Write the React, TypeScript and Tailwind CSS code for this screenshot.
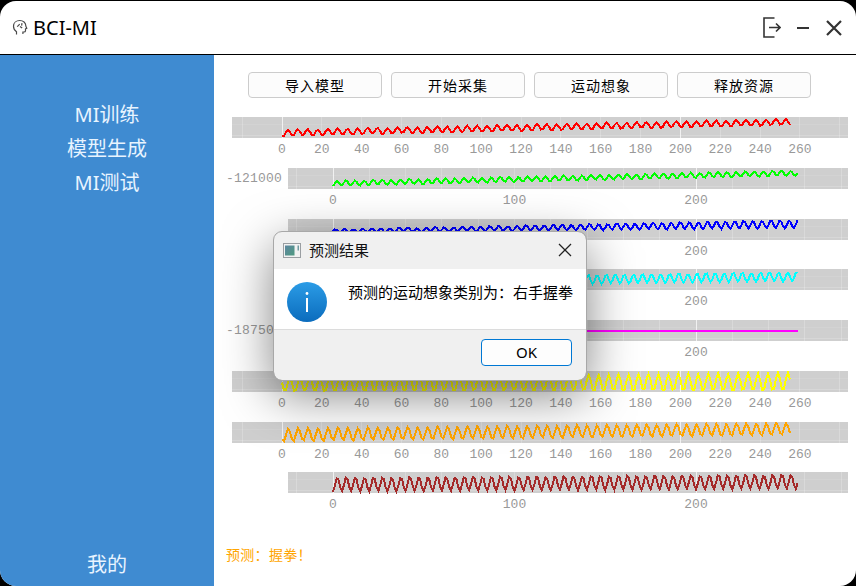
const cjk = "font-['Noto_Sans','Noto_Sans_CJK_SC',sans-serif]";

type Plot = {
  color: string;
  scale: "wide" | "narrow";
  y0: number;
  y1: number;
  amp0: number;
  amp1: number;
  yLabel?: string;
  ticks?: number[];
  seed: number;
};

// rows 3-5 have their left ticks behind the dialog in the picture, only 200 shows
const plots: Plot[] = [
  { color: "#ff0000", scale: "wide", y0: 16, y1: 5, amp0: 3, amp1: 3, seed: 1 },
  { color: "#00ff00", scale: "narrow", y0: 15.5, y1: 5, amp0: 2.5, amp1: 2.5, yLabel: "-121000", seed: 2 },
  { color: "#0000ff", scale: "narrow", y0: 12, y1: 5, amp0: 1.5, amp1: 4, ticks: [200], seed: 3 },
  { color: "#00ffff", scale: "narrow", y0: 14, y1: 7.5, amp0: 4.5, amp1: 4.5, ticks: [200], seed: 4 },
  { color: "#ff00ff", scale: "narrow", y0: 11, y1: 11, amp0: 0, amp1: 0, yLabel: "-187500", ticks: [200], seed: 5 },
  { color: "#ffff00", scale: "wide", y0: 13.5, y1: 11, amp0: 7, amp1: 9, seed: 6 },
  { color: "#ffa500", scale: "wide", y0: 13, y1: 7, amp0: 6.5, amp1: 6, seed: 7 },
  { color: "#a52a2a", scale: "narrow", y0: 12.5, y1: 9.5, amp0: 7, amp1: 7, seed: 8 },
];

const WIDE = { width: 616, origin: 50, unit: 1.992, ticks: [0, 20, 40, 60, 80, 100, 120, 140, 160, 180, 200, 220, 240, 260], last: 255 };
const NARROW = { width: 560, origin: 45, unit: 1.815, ticks: [0, 100, 200], last: 256 };
const GRID = [-40, -20, 0, 20, 40, 60, 80, 100, 120, 140, 160, 180, 200, 220, 240, 260, 280];

function wavePoints(p: Plot, origin: number, unit: number, last: number) {
  const pts: string[] = [];
  for (let i = 0; i <= last; i++) {
    const t = i / last;
    const amp = p.amp0 + (p.amp1 - p.amp0) * t;
    const jitter = amp ? Math.sin(i * 0.37 + p.seed) * 0.4 : 0;
    const y = p.y0 + (p.y1 - p.y0) * t + amp * Math.sin((i * 2 * Math.PI) / 5 + p.seed) + jitter;
    pts.push(`${(origin + i * unit).toFixed(1)},${y.toFixed(1)}`);
  }
  return pts.join(" ");
}

function PlotRow({ plot }: { plot: Plot }) {
  const s = plot.scale === "wide" ? WIDE : NARROW;
  const ticks = plot.ticks ?? s.ticks;

  return (
    <div className="flex justify-end">
      {plot.yLabel ? (
        <div className="mt-px h-[19px] w-[62px] shrink-0 font-['Liberation_Mono',monospace] text-[13px] leading-[19px] tracking-[0.2px] text-[#999999]">
          {plot.yLabel}
        </div>
      ) : null}
      <svg width={s.width} height={50} className="shrink-0 font-['Liberation_Mono',monospace] text-[13px]">
        <rect x={0} y={0} width={s.width} height={21} fill="#cfcfcf" />
        {GRID.map((g) => (
          <line
            key={g}
            x1={s.origin + g * s.unit}
            x2={s.origin + g * s.unit}
            y1={0}
            y2={21}
            stroke="#ffffff"
            strokeOpacity={g === 0 || g === 200 ? 0.7 : 0.22}
            shapeRendering="crispEdges"
          />
        ))}
        <line x1={0} x2={s.width} y1={7} y2={7} stroke="#ffffff" strokeOpacity={0.1} shapeRendering="crispEdges" />
        <line x1={0} x2={s.width} y1={18} y2={18} stroke="#ffffff" strokeOpacity={0.18} shapeRendering="crispEdges" />
        <polyline
          points={wavePoints(plot, s.origin, s.unit, s.last)}
          fill="none"
          stroke={plot.color}
          strokeWidth={2}
          shapeRendering="crispEdges"
        />
        {ticks.map((t) => (
          <text key={t} x={s.origin + t * s.unit} y={36} textAnchor="middle" fill="#999999">
            {t}
          </text>
        ))}
      </svg>
    </div>
  );
}

function BrainIcon() {
  return (
    <svg width={16} height={17} viewBox="0 0 16 17" fill="none" stroke="#4a4a4a" strokeWidth={1.2}>
      <path d="M4.5 15.5V12.7C2.6 11.4 1.5 9.6 1.5 7.2 1.5 3.8 4.2 1.5 7.8 1.5c3.4 0 6 2.2 6 5.2 0 .7.6 1.8 1 2.6l-1.3.6v1.8c0 .9-.7 1.3-1.6 1.3h-1v2" />
      <path d="M5 7.5c1.2-.4 2-1.2 2.6-2.6M8 7.5l2.2 1.6M10 4.2l-.4 2.4" />
    </svg>
  );
}

function LogoutIcon() {
  return (
    <svg width={18} height={21} viewBox="0 0 18 21" fill="none" stroke="#333333" strokeWidth={1.6}>
      <path d="M11.5 1H1v19h10.5" />
      <path d="M6 10.5h11M13 6.5l4 4-4 4" />
    </svg>
  );
}

function CloseIcon({ size, weight, color }: { size: number; weight: number; color: string }) {
  return (
    <svg width={size} height={size} viewBox={`0 0 ${size} ${size}`} fill="none" stroke={color} strokeWidth={weight}>
      <path d={`M1 1L${size - 1} ${size - 1}M${size - 1} 1L1 ${size - 1}`} />
    </svg>
  );
}

function InfoIcon() {
  return (
    <svg width={40} height={40} viewBox="0 0 40 40">
      <defs>
        <linearGradient id="infoFill" x1="0" y1="0" x2="0" y2="1">
          <stop offset="0" stopColor="#2b9ce6" />
          <stop offset="1" stopColor="#0b6cbd" />
        </linearGradient>
      </defs>
      <circle cx={20} cy={20} r={20} fill="url(#infoFill)" />
      <rect x={19} y={16} width={2} height={14} fill="#ffffff" />
      <circle cx={20} cy={11.5} r={1.4} fill="#ffffff" />
    </svg>
  );
}

function WindowIcon() {
  return (
    <svg width={18} height={15} viewBox="0 0 18 15">
      <defs>
        <linearGradient id="winFill" x1="0" y1="0" x2="1" y2="1">
          <stop offset="0" stopColor="#5d86a0" />
          <stop offset="1" stopColor="#4f9a80" />
        </linearGradient>
      </defs>
      <rect x={0.5} y={0.5} width={17} height={14} fill="#f2f2f2" stroke="#9a9ea2" />
      <rect x={2} y={2.5} width={9.5} height={10} fill="url(#winFill)" />
      <rect x={14.5} y={2.5} width={1.5} height={5} fill="#6f9aa0" />
    </svg>
  );
}

function PredictionDialog() {
  return (
    <div className="absolute left-[274px] top-[232px] z-10 flex h-[148px] w-[312px] flex-col overflow-hidden rounded-[8px] bg-[#f0f0f0] shadow-[0_14px_50px_rgba(0,0,0,0.5)] outline outline-1 outline-[#a8a8a8]">
      <div className="flex h-[37px] shrink-0 items-center pb-px pl-[9px] pr-[14px]">
        <WindowIcon />
        <span className={`ml-[8px] text-[15px] text-[#111111] ${cjk}`}>预测结果</span>
        <div className="ml-auto">
          <CloseIcon size={14} weight={1.3} color="#222222" />
        </div>
      </div>
      <div className="flex h-[61px] shrink-0 border-b border-[#dcdcdc] bg-white pl-[13px]">
        <div className="mt-[13px]">
          <InfoIcon />
        </div>
        <p className={`ml-[21px] mt-[13px] whitespace-nowrap text-[15px] leading-[20px] text-black ${cjk}`}>
          预测的运动想象类别为：右手握拳
        </p>
      </div>
      <div className="flex justify-end pr-[14px] pt-[9px]">
        <button className="h-[27px] w-[91px] rounded-[4px] border border-[#0078d4] bg-[#fdfdfd] font-['Noto_Sans',sans-serif] text-[15px] text-black">
          OK
        </button>
      </div>
    </div>
  );
}

export default function App() {
  return (
    <div className="relative h-[586px] w-[856px] overflow-hidden bg-black pt-px">
      <div className="flex h-full flex-col overflow-hidden rounded-[16px] bg-white">
        {/* Title bar */}
        <div className="flex h-[54px] shrink-0 items-center border-b border-black pl-[12px] pr-[14px]">
          <BrainIcon />
          <span className={`ml-[5px] text-[20px] text-black ${cjk}`}>BCI-MI</span>
          <div className="ml-auto">
            <LogoutIcon />
          </div>
          <div className="ml-[16px] h-[2px] w-[12px] bg-[#333333]" />
          <div className="ml-[17px]">
            <CloseIcon size={16} weight={2.2} color="#333333" />
          </div>
        </div>

        <div className="flex min-h-0 flex-1">
          {/* Sidebar */}
          <aside className={`flex w-[214px] shrink-0 flex-col items-center bg-[#3f8bd1] pb-[4px] pt-[43px] text-[20px] leading-[34px] text-[#e8f4ff] ${cjk}`}>
            <div>MI训练</div>
            <div>模型生成</div>
            <div>MI测试</div>
            <div className="mt-auto">我的</div>
          </aside>

          {/* Main */}
          <main className="flex min-w-0 flex-1 flex-col pl-[12px] pr-[8px] pt-[17px]">
            <div className="flex gap-[9px] pl-[22px]">
              {["导入模型", "开始采集", "运动想象", "释放资源"].map((label) => (
                <button
                  key={label}
                  className={`h-[26px] w-[134px] rounded-[4px] border border-[#cccccc] bg-[#fcfcfc] text-[14px] tracking-[1px] text-black ${cjk}`}
                >
                  {label}
                </button>
              ))}
            </div>
            <div className="mt-[19px] grid h-[406px] grid-rows-8">
              {plots.map((p) => (
                <PlotRow key={p.seed} plot={p} />
              ))}
            </div>
            <div className={`mt-[22px] text-[14px] leading-[20px] tracking-[0.3px] text-[#ffa500] ${cjk}`}>预测：握拳！</div>
          </main>
        </div>
      </div>
      <PredictionDialog />
    </div>
  );
}
